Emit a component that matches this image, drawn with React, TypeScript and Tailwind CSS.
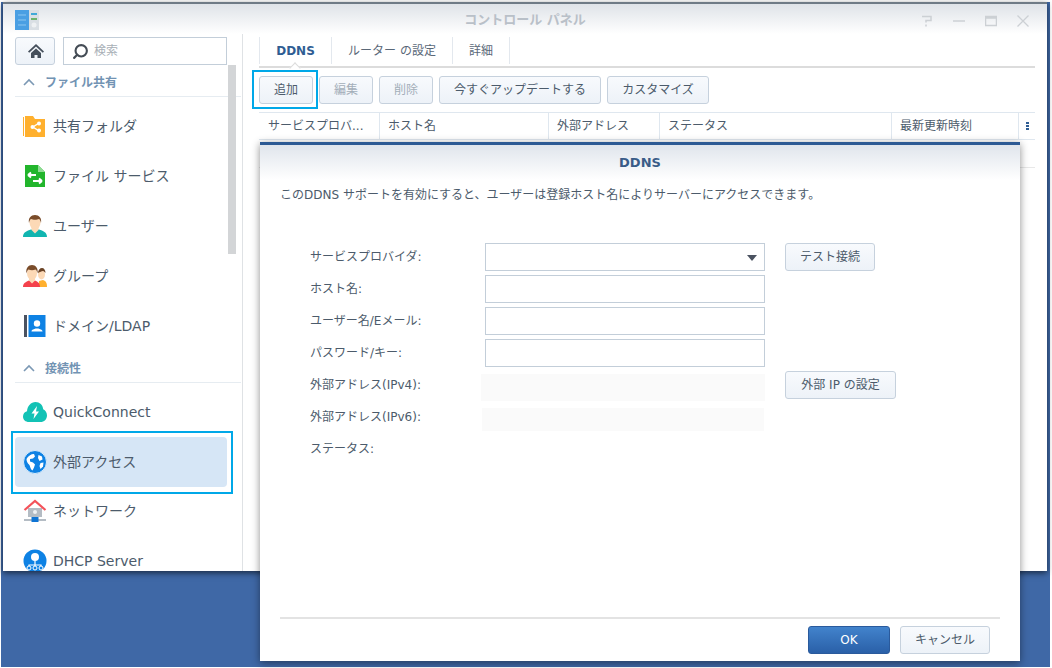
import { Search } from "lucide-react";
import type { ReactNode } from "react";

function FolderIcon() {
  return (
    <svg viewBox="0 0 24 24" className="w-6 h-6">
      <rect x="0" y="3" width="1" height="19" fill="#ffb02e" />
      <path d="M2 2h8l2 3h10v18H2z" fill="#ffb02e" />
      <path d="M16 9l-6 4 6 4" fill="none" stroke="#fff" strokeWidth="1.4" />
      <circle cx="9.5" cy="13" r="2" fill="#fff" />
      <circle cx="16" cy="9.5" r="2" fill="#fff" />
      <circle cx="16" cy="16.5" r="2" fill="#fff" />
    </svg>
  );
}

function FileIcon() {
  return (
    <svg viewBox="0 0 24 24" className="w-6 h-6">
      <path d="M2 1h13l7 7v15H2z" fill="#22b52c" />
      <path d="M15 1l7 7h-7z" fill="#8fdc94" />
      <path d="M5 11h8M5 11l3-2.5M5 11l3 2.5M19 17h-9M19 17l-3-2.5M19 17l-3 2.5" fill="none" stroke="#fff" strokeWidth="2" />
    </svg>
  );
}

function UserIcon() {
  return (
    <svg viewBox="0 0 24 24" className="w-6 h-6">
      <path d="M0 23c0-5 4-6 8-7.500h8c4 1.500 8 2.500 8 7.500z" fill="#12b5b0" />
      <path d="M8.500 13h7v3l-3.500 3.500L8.500 16z" fill="#fcd9b6" />
      <ellipse cx="12" cy="8.500" rx="5.500" ry="7" fill="#fcd9b6" />
      <path d="M6 9c-1-5 2-8 6-8s7 3 6 8c-.5-2-1-3.500-2-4-2 1-6 1-8 0-1 .5-1.500 2-2 4z" fill="#7a4c2a" />
    </svg>
  );
}

function GroupIcon() {
  return (
    <svg viewBox="0 0 24 24" className="w-6 h-6">
      <path d="M16 17l4-1c3 1 4 3 4 7h-8z" fill="#ffb02e" />
      <ellipse cx="18.500" cy="10.500" rx="3.500" ry="5" fill="#fcd9b6" />
      <path d="M15 9c0-3 2-5 4-5s3.500 2 3.500 5c-1-1-1.500-2-2.500-2-1.500 0-3 1-5 2z" fill="#6b4325" />
      <path d="M0 23c0-4 3-5 6-6.500h6c3 1.500 5 2.500 5 6.500z" fill="#f4424c" />
      <path d="M6 13h6v3.500L9 19.500l-3-3z" fill="#fcd9b6" />
      <ellipse cx="9" cy="9" rx="5" ry="7" fill="#fcd9b6" />
      <path d="M3.500 9.500C2.500 4 5.500 1 9 1s6.500 3 5.500 8.500C14 7.500 13.500 6 12.500 5.500c-2 1-5 1-7 0-1 .5-1.500 2-2 4z" fill="#7a4c2a" />
    </svg>
  );
}

function DomainIcon() {
  return (
    <svg viewBox="0 0 24 24" className="w-6 h-6">
      <rect x="1" y="1" width="3" height="22" fill="#4a5260" />
      <rect x="5.500" y="1" width="17" height="22" fill="#0e82e4" />
      <circle cx="14" cy="9.500" r="3.200" fill="#fff" />
      <path d="M8.500 17.500c0-2 3-2.500 4-3h3c1 .5 4 1 4 3z" fill="#fff" />
    </svg>
  );
}

function CloudIcon() {
  return (
    <svg viewBox="0 0 24 24" className="w-6 h-6">
      <path d="M6 22c-3.500 0-6-2.200-6-5.500 0-2.600 1.600-4.600 4-5.200C4.400 6 8 2 12.500 2c4.200 0 7.300 3 7.700 7.200 2.300 1.100 3.800 3.600 3.800 6.300 0 3.800-2.800 6.500-6.500 6.500z" fill="#13c2b5" />
      <path d="M14 6l-5.500 7.500h3L10.500 19l5.500-7.500h-3z" fill="#fff" />
    </svg>
  );
}

function GlobeIcon() {
  return (
    <svg viewBox="0 0 24 24" className="w-6 h-6">
      <circle cx="12" cy="12" r="11.500" fill="#0e82e4" stroke="#d8ecfb" strokeWidth="1" />
      <path d="M3.500 9C5 6 8 4 11 4l1 2.500-2 2-3 .5v2.500l3 1 2 2-1 3-1.500 3C7 19 7.500 16 6 14.500 5 13.500 3.500 12 3.500 9z" fill="#fff" />
      <path d="M15.500 5l3.500 1.500.5 3-3 1.500-1.500-3z" fill="#fff" />
      <path d="M17.500 13l3-.5-.5 4-2.500 2.500-1-3z" fill="#fff" />
    </svg>
  );
}

function NetworkIcon() {
  return (
    <svg viewBox="0 0 24 24" className="w-6 h-6">
      <rect x="5" y="9" width="14" height="9" fill="#b4bcc4" />
      <rect x="10" y="11" width="4" height="4" rx="2" fill="#eef1f4" />
      <path d="M1.500 11L12 2l10.500 9" fill="none" stroke="#f4525a" strokeWidth="2.200" />
      <rect x="1" y="20" width="22" height="2" fill="#b4bcc4" />
      <rect x="8.500" y="18" width="7" height="5" fill="#0e74d4" />
    </svg>
  );
}

function DhcpIcon() {
  return (
    <svg viewBox="0 0 24 24" className="w-6 h-6">
      <circle cx="12" cy="12" r="11.500" fill="#0e82e4" />
      <circle cx="12" cy="8" r="4" fill="#fff" />
      <path d="M12 12v5M6 18v-2h12v2" fill="none" stroke="#fff" strokeWidth="1.200" />
      <circle cx="6" cy="19" r="2" fill="#0e82e4" stroke="#fff" />
      <circle cx="12" cy="19" r="2" fill="#0e82e4" stroke="#fff" />
      <circle cx="18" cy="19" r="2" fill="#0e82e4" stroke="#fff" />
    </svg>
  );
}

function Chevron() {
  return (
    <svg viewBox="0 0 12 8" className="w-3 h-2">
      <path d="M1 7l5-5 5 5" fill="none" stroke="#7b98b4" strokeWidth="1.600" />
    </svg>
  );
}

function SectionHeader({ title }: { title: string }) {
  return (
    <div className="flex items-center h-[32px] pt-[3px] mr-[1px] border-b border-[#e6ecf1]">
      <div className="ml-2 mr-[10px] flex items-center"><Chevron /></div>
      <span className="text-xs font-bold text-[#7293b3] font-['Noto_Sans_CJK_JP',sans-serif]">{title}</span>
    </div>
  );
}

function NavItem({ icon, label, selected, className = "" }: { icon: ReactNode; label: string; selected?: boolean; className?: string }) {
  return (
    <div className={`relative flex items-center h-[50px] w-[212px] pl-2 gap-[6px] rounded text-sm text-[#4c5b6b] ${selected ? "bg-[#d6e6f6]" : ""} ${className}`}>
      {icon}
      <span>{label}</span>
      {selected && <div className="absolute -left-1 -top-[6px] w-[222px] h-[63px] border-2 border-[#00a8e8]" />}
    </div>
  );
}

function Btn({ label, className = "", muted }: { label: string; className?: string; muted?: boolean }) {
  return (
    <button className={`h-7 shrink-0 rounded-[3px] border border-[#c6d1dd] bg-gradient-to-b from-[#f8fafd] to-[#edf2f8] text-xs ${muted ? "text-[#a3aeb9]" : "text-[#4c5b6b]"} ${className}`}>
      {label}
    </button>
  );
}

function Sidebar() {
  return (
    <div className="relative w-[240px] shrink-0 h-full border-r border-[#dfe2e5] pl-3 pt-[3px] overflow-hidden">
      <div className="flex gap-2 w-[212px]">
        <button className="w-10 h-7 flex items-center justify-center rounded-[3px] border border-[#c6d1dd] bg-gradient-to-b from-[#f8fafd] to-[#edf2f8]">
          <svg viewBox="0 0 16 16" className="w-4 h-4 ml-px">
            <path d="M8 1L0 8.500l1.200 1.200L8 3.500l6.800 6.200L16 8.500z" fill="#454f5b" />
            <path d="M3 10l5-4.500 5 4.500v5H9.500v-3h-3v3H3z" fill="#454f5b" />
          </svg>
        </button>
        <div className="flex-1 h-7 flex items-center pl-2 gap-[5px] border border-[#c3ced9] text-xs text-[#a8afb6]">
          <Search className="w-[17px] h-[17px] text-[#444c55] -scale-x-100" strokeWidth={3} />
          <span>検索</span>
        </div>
      </div>
      <SectionHeader title="ファイル共有" />
      <div className="pt-1">
        <NavItem icon={<FolderIcon />} label="共有フォルダ" />
        <NavItem icon={<FileIcon />} label="ファイル サービス" />
        <NavItem icon={<UserIcon />} label="ユーザー" />
        <NavItem icon={<GroupIcon />} label="グループ" />
        <NavItem icon={<DomainIcon />} label="ドメイン/LDAP" />
      </div>
      <SectionHeader title="接続性" />
      <div className="pt-1">
        <NavItem icon={<CloudIcon />} label="QuickConnect" />
        <NavItem icon={<GlobeIcon />} label="外部アクセス" selected />
        <NavItem icon={<NetworkIcon />} label="ネットワーク" className="-mt-px" />
        <NavItem icon={<DhcpIcon />} label="DHCP Server" />
      </div>
      <div className="absolute left-[225px] top-[31px] w-2 h-[189px] bg-[#d3d5d7]" />
    </div>
  );
}

const columns = [
  { label: "サービスプロバ...", width: "w-[121px]" },
  { label: "ホスト名", width: "w-[169px]" },
  { label: "外部アドレス", width: "w-[111px]" },
  { label: "ステータス", width: "w-[232px]" },
  { label: "最新更新時刻", width: "w-[127px]" },
];

function MainPanel() {
  return (
    <div className="flex-1 min-w-0 pl-4 pr-3">
      <div className="flex h-[34px] border-b-2 border-[#dcdcdc] relative">
        <div className="w-[73px] h-[27px] mt-[3px] flex items-center justify-center border-x border-[#e3e8ee] text-xs font-bold text-[#2f5d93]">DDNS</div>
        <div className="w-[121px] h-[27px] mt-[3px] flex items-center justify-center border-r border-[#e3e8ee] text-xs text-[#5a6878]">ルーター の設定</div>
        <div className="w-[57px] h-[27px] mt-[3px] flex items-center justify-center border-r border-[#e3e8ee] text-xs text-[#5a6878]">詳細</div>
        <div className="absolute left-[32px] -bottom-[6px] w-2 h-2 rotate-45 bg-white border-l border-t border-[#dcdcdc]" />
      </div>
      <div className="relative flex gap-[6px] mt-2">
        <Btn label="追加" className="w-[54px]" />
        <Btn label="編集" className="w-[54px]" muted />
        <Btn label="削除" className="w-[54px]" muted />
        <Btn label="今すぐアップデートする" className="w-[162px]" />
        <Btn label="カスタマイズ" className="w-[102px]" />
        <div className="absolute -left-[7px] -top-[6px] w-[66px] h-[39px] border-2 border-[#00a8e8]" />
      </div>
      <div className="flex h-7 mt-2 border-y border-[#dfe7ef] text-xs text-[#4c5b6b]">
        {columns.map((c, i) => (
          <div key={c.label} className={`${c.width} flex items-center ${i === 0 ? "pl-[9px]" : "pl-2"} border-r border-[#dfe7ef]`}>{c.label}</div>
        ))}
        <div className="flex-1 flex flex-col items-center justify-center gap-px">
          <span className="w-[3px] h-[2px] bg-[#2f5d93]" />
          <span className="w-[3px] h-[2px] bg-[#2f5d93]" />
          <span className="w-[3px] h-[2px] bg-[#2f5d93]" />
        </div>
      </div>
      <div className="h-7 border-b border-[#e8e8e8]" />
    </div>
  );
}

function FormLabel({ children }: { children: ReactNode }) {
  return <div className="flex items-center h-7 text-xs text-[#4c5b6b]">{children}</div>;
}

function TextField() {
  return <div className="h-7 border border-[#c3ced9] bg-white" />;
}

function DdnsDialog() {
  return (
    <div className="absolute left-[260px] top-[142px] w-[760px] h-[519px] flex flex-col bg-white border-t-[3px] border-[#2d5a94] shadow-[0_2px_8px_rgba(0,0,0,0.45)]">
      <div className="h-[35px] flex items-center justify-center bg-gradient-to-b from-[#e0e5ec] to-white text-[13px] font-bold text-[#3a5c88]">DDNS</div>
      <p className="mt-[5px] ml-5 text-xs leading-5 text-[#4c5b6b]">このDDNS サポートを有効にすると、ユーザーは登録ホスト名によりサーバーにアクセスできます。</p>
      <div className="grid grid-cols-[155px_280px_auto] auto-rows-[28px] gap-x-5 gap-y-1 ml-[50px] mt-[38px] justify-start">
        <FormLabel>サービスプロバイダ:</FormLabel>
        <div className="relative">
          <TextField />
          <div className="absolute right-[8px] top-[12px] w-0 h-0 border-x-[5px] border-x-transparent border-t-[6px] border-t-[#4a5260]" />
        </div>
        <Btn label="テスト接続" className="w-[90px]" />
        <FormLabel>ホスト名:</FormLabel>
        <TextField />
        <div />
        <FormLabel>ユーザー名/Eメール:</FormLabel>
        <TextField />
        <div />
        <FormLabel>パスワード/キー:</FormLabel>
        <TextField />
        <div />
        <FormLabel>外部アドレス(IPv4):</FormLabel>
        <div className="h-[27px] mt-[3px] -ml-1 bg-[#fafafa]" />
        <Btn label="外部 IP の設定" className="w-[111px]" />
        <FormLabel>外部アドレス(IPv6):</FormLabel>
        <div className="h-[23px] mt-[5px] -ml-[3px] mr-px bg-[#fafafa]" />
        <div />
        <FormLabel>ステータス:</FormLabel>
      </div>
      <div className="mt-auto mx-5 h-[44px] border-t-2 border-[#e3e3e3] flex items-start justify-end gap-[10px] pt-[7px] pr-[10px]">
        <button className="w-[82px] h-7 rounded-[3px] border border-[#2a5a9c] bg-gradient-to-b from-[#4283cc] to-[#2a60a8] text-xs text-white">OK</button>
        <Btn label="キャンセル" className="w-[90px]" />
      </div>
    </div>
  );
}

export default function App() {
  return (
    <div className="relative w-[1052px] h-[668px] overflow-hidden bg-white font-['DejaVu_Sans','Noto_Sans_CJK_JP',sans-serif]">
      <div className="ml-px mt-[2px] w-[1049px] h-[665px] bg-[#3f68a6] pl-[2px] pr-[3px]">
        <div className="h-[569px] flex flex-col bg-white border-t-2 border-[#6f7b86] shadow-[0_2px_6px_rgba(0,0,0,0.6)]">
          <div className="relative h-[30px] shrink-0 flex items-center justify-center pt-px bg-gradient-to-b from-[#dfe3e8] to-white text-[13px] font-bold text-[#b9c0c8]">
            <svg viewBox="0 0 24 21" className="absolute left-3 top-[6px] w-6 h-[21px]">
              <rect x="0" y="0" width="14" height="20" fill="#4a9fe3" />
              <rect x="14" y="0" width="10" height="20" fill="#d9dfe4" />
              <path d="M3 5h8M3 10h8M3 15h8" stroke="#8cc6f0" strokeWidth="1" />
              <path d="M16 4h6" stroke="#3fa9d8" strokeWidth="2" />
              <path d="M16 9h6" stroke="#6cb36c" strokeWidth="2" />
              <circle cx="19" cy="15" r="2.500" fill="#eef1f3" />
            </svg>
            <span>コントロール パネル</span>
            <div className="absolute right-[18px] top-[11px] flex items-center gap-[20px] text-[#ccd0d4]">
              <svg viewBox="0 0 12 12" className="w-3 h-3"><path d="M1 1.500h9v4H5v2M5 9.500v2" fill="none" stroke="currentColor" strokeWidth="1.500" /></svg>
              <svg viewBox="0 0 12 12" className="w-3 h-3"><path d="M0 6h12" stroke="currentColor" strokeWidth="1.500" /></svg>
              <svg viewBox="0 0 12 12" className="w-3 h-3"><path d="M0.500 1.500h11v9h-11zM0.500 3h11" fill="none" stroke="currentColor" strokeWidth="1.500" /></svg>
              <svg viewBox="0 0 12 12" className="w-3 h-3"><path d="M0.500 0.500l11 11M11.500 0.500l-11 11" stroke="currentColor" strokeWidth="1.300" /></svg>
            </div>
          </div>
          <div className="flex-1 min-h-0 flex">
            <Sidebar />
            <MainPanel />
          </div>
        </div>
      </div>
      <DdnsDialog />
    </div>
  );
}
